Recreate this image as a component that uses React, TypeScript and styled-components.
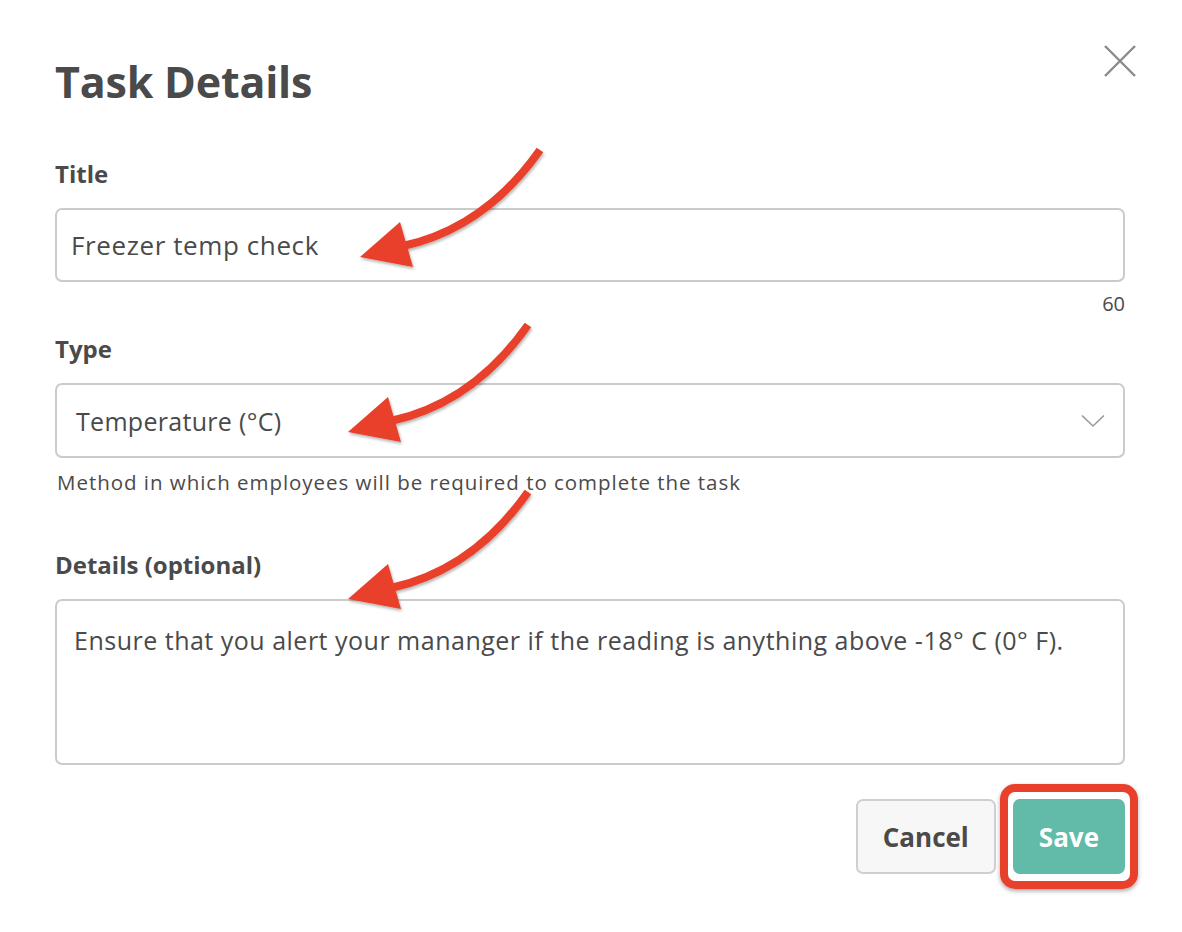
import React from "react";
import styled, { createGlobalStyle } from "styled-components";

const GlobalStyle = createGlobalStyle`
  html, body { margin: 0; padding: 0; background: #ffffff; }
  body { font-family: "Open Sans", Lato, "Liberation Sans", sans-serif; color: #4a4a4a; }
  * { box-sizing: border-box; }
`;

const Dialog = styled.div`
  position: relative;
  width: 1182px;
  height: 932px;
  padding: 52px 57px 0 55px;
  background: #fff;
`;

const Header = styled.div`
  display: flex;
  justify-content: space-between;
  align-items: flex-start;
`;

const Heading = styled.h1`
  margin: 0;
  font-size: 43px;
  font-weight: 700;
  line-height: 60px;
  color: #4a4a4a;
  letter-spacing: -0.2px;
`;

const CloseButton = styled.button`
  margin: -8px -12px 0 0;
  padding: 0;
  width: 34px;
  height: 34px;
  border: none;
  background: none;
  display: flex;
  align-items: center;
  justify-content: center;
`;

const Field = styled.div<{ $top: number }>`
  margin-top: ${(p) => p.$top}px;
  display: flex;
  flex-direction: column;
`;

const Label = styled.label`
  font-size: 24px;
  font-weight: 700;
  line-height: 28px;
  color: #4a4a4a;
  margin-bottom: 20px;
`;

const Box = styled.div<{ $height: number }>`
  position: relative;
  height: ${(p) => p.$height}px;
  border: 2px solid #cbcbcb;
  border-radius: 7px;
  background: #fff;
  display: flex;
  align-items: ${(p) => (p.$height > 100 ? "flex-start" : "center")};
`;

const BoxText = styled.span<{ $pad: number; $padTop?: number; $size: number; $track: number }>`
  padding-left: ${(p) => p.$pad}px;
  padding-top: ${(p) => p.$padTop ?? 0}px;
  font-size: ${(p) => p.$size}px;
  letter-spacing: ${(p) => p.$track}px;
  color: #4a4a4a;
`;

const Chevron = styled.span`
  margin-left: auto;
  margin-right: 18px;
  display: flex;
`;

const Counter = styled.div`
  text-align: right;
  font-size: 20px;
  line-height: 24px;
  margin-top: 10px;
  color: #4a4a4a;
`;

const Helper = styled.div`
  font-size: 20.5px;
  line-height: 24px;
  margin-top: 12px;
  padding-left: 2px;
  letter-spacing: 0.97px;
  color: #4a4a4a;
`;

const Actions = styled.div`
  margin-top: 34px;
  display: flex;
  justify-content: flex-end;
  align-items: center;
  gap: 17px;
`;

const Button = styled.button<{ $primary?: boolean }>`
  height: 75px;
  padding: 0 ${(p) => (p.$primary ? 26 : 25)}px;
  border-radius: 7px;
  font-family: "Open Sans", Lato, sans-serif;
  font-size: 26px;
  font-weight: 700;
  border: ${(p) => (p.$primary ? "none" : "2px solid #cfcfcf")};
  background: ${(p) => (p.$primary ? "#61bba8" : "#f7f7f7")};
  color: ${(p) => (p.$primary ? "#ffffff" : "#4a4a4a")};
`;

const Highlight = styled.span`
  position: relative;
  display: inline-flex;
  &::after {
    content: "";
    position: absolute;
    top: -15px;
    bottom: -15px;
    left: -13px;
    right: -13px;
    border: 8px solid #e8402a;
    border-radius: 15px;
    box-shadow: 0 2px 4px rgba(0, 0, 0, 0.35);
    pointer-events: none;
  }
`;

const ArrowWrap = styled.div<{ $x: number; $y: number }>`
  position: absolute;
  left: ${(p) => p.$x}px;
  top: ${(p) => p.$y}px;
  width: 210px;
  height: 140px;
  pointer-events: none;
`;

const Arrow = ({ x, y }: { x: number; y: number }) => (
  <ArrowWrap $x={x} $y={y}>
    <svg width="210" height="140" viewBox="0 0 210 140">
      <defs>
        <filter id={`sh${y}`} x="-20%" y="-20%" width="140%" height="140%">
          <feDropShadow dx="1" dy="2" stdDeviation="1.5" floodColor="#000" floodOpacity="0.3" />
        </filter>
      </defs>
      <g filter={`url(#sh${y})`}>
        <path d="M195 10 Q140 88 58 106" fill="none" stroke="#e8402a" strokeWidth="8" strokeLinecap="butt" />
        <polygon points="15,117 55,82 68,127" fill="#e8402a" />
      </g>
    </svg>
  </ArrowWrap>
);

export default function App() {
  return (
    <>
      <GlobalStyle />
      <Dialog>
        <Header>
          <Heading>Task Details</Heading>
          <CloseButton aria-label="Close">
            <svg width="34" height="34" viewBox="0 0 34 34">
              <path d="M2 2 L32 32 M32 2 L2 32" stroke="#8a8a8a" strokeWidth="2.4" />
            </svg>
          </CloseButton>
        </Header>

        <Field $top={48}>
          <Label>Title</Label>
          <Box $height={74}>
            <BoxText $pad={14} $size={26} $track={0.6}>Freezer temp check</BoxText>
          </Box>
          <Counter>60</Counter>
        </Field>

        <Field $top={19}>
          <Label>Type</Label>
          <Box $height={75}>
            <BoxText $pad={19} $size={25} $track={0.3}>Temperature (°C)</BoxText>
            <Chevron>
              <svg width="24" height="14" viewBox="0 0 24 14">
                <path d="M1 1.5 L12 12 L23 1.5" fill="none" stroke="#999999" strokeWidth="1.6" />
              </svg>
            </Chevron>
          </Box>
          <Helper>Method in which employees will be required to complete the task</Helper>
        </Field>

        <Field $top={57}>
          <Label>Details (optional)</Label>
          <Box $height={166}>
            <BoxText $pad={17} $padTop={22} $size={25} $track={0.5}>
              Ensure that you alert your mananger if the reading is anything above -18° C (0° F).
            </BoxText>
          </Box>
        </Field>

        <Actions>
          <Button>Cancel</Button>
          <Highlight>
            <Button $primary>Save</Button>
          </Highlight>
        </Actions>

        <Arrow x={345} y={140} />
        <Arrow x={333} y={315} />
        <Arrow x={333} y={482} />
      </Dialog>
    </>
  );
}
